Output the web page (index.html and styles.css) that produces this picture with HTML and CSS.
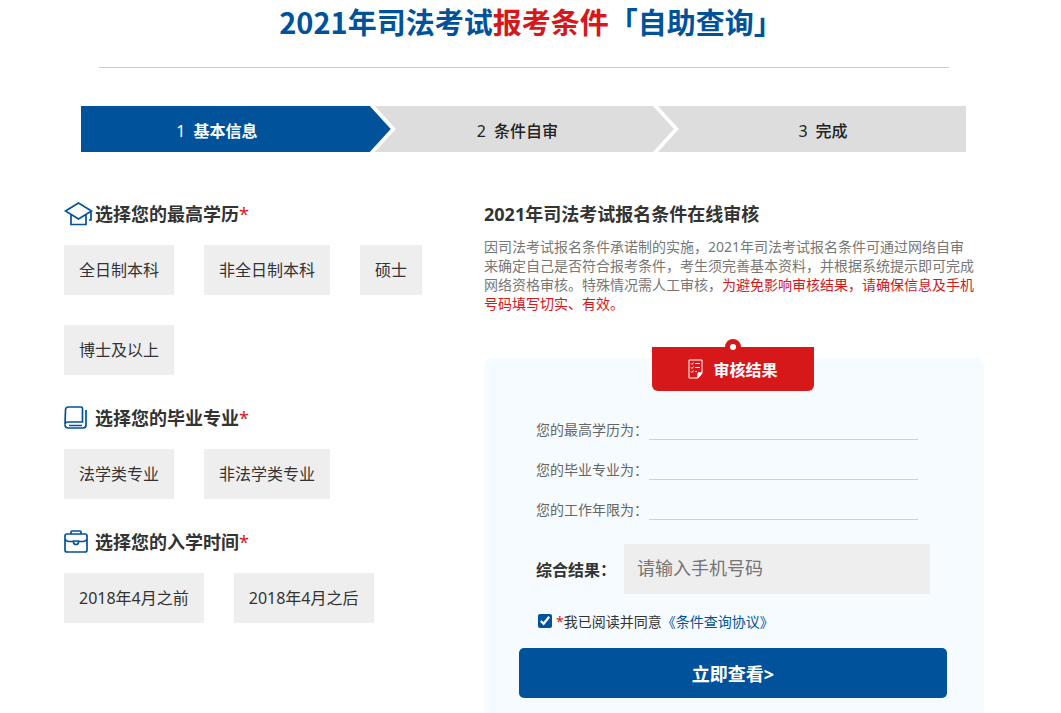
FILE: index.html
```html
<!DOCTYPE html>
<html lang="zh-CN">
<head>
  <meta charset="UTF-8">
  <meta name="viewport" content="width=device-width, initial-scale=1">
  <title>2021年司法考试报考条件自助查询</title>
  <link rel="stylesheet" href="styles.css">
</head>
<body>
  <div class="container">
    <h1 class="page-title">2021年司法考试<span class="red">报考条件</span>「自助查询」</h1>

    <ol class="steps">
      <li class="step active"><span class="step-num">1</span>基本信息</li>
      <li class="step"><span class="step-num">2</span>条件自审</li>
      <li class="step"><span class="step-num">3</span>完成</li>
    </ol>

    <div class="main">
      <div class="choices">
        <section class="group">
          <h2 class="group-title">
            <svg class="icon" width="31" height="24" viewBox="0 0 31 24">
              <path d="M1.500 9L14.500 1l13 8-13 8z M7 12.500v10h15v-10 M27 9.500v8.500h-2"/>
            </svg>选择您的最高学历<span class="red star">*</span>
          </h2>
          <div class="options">
            <button type="button" class="option">全日制本科</button>
            <button type="button" class="option">非全日制本科</button>
            <button type="button" class="option">硕士</button>
            <button type="button" class="option">博士及以上</button>
          </div>
        </section>

        <section class="group">
          <h2 class="group-title">
            <svg class="icon" width="31" height="24" viewBox="0 0 31 24">
              <path d="M4.500 1H17q1.500 0 1.500 1.500V16H4q-3 0-3 2.500L1.500 4q0-3 3-3z"/>
              <path d="M1 18.500q0 3.500 3.500 3.500H19q3 0 3-3V4 M5 19.500h13"/>
            </svg>选择您的毕业专业<span class="red star">*</span>
          </h2>
          <div class="options">
            <button type="button" class="option">法学类专业</button>
            <button type="button" class="option">非法学类专业</button>
          </div>
        </section>

        <section class="group">
          <h2 class="group-title">
            <svg class="icon" width="31" height="24" viewBox="0 0 31 24">
              <rect x="1" y="4" width="22" height="18" rx="2"/>
              <path d="M7 4V2q0-1 1-1h8q1 0 1 1v2 M1 9.500q2 2 4 2h4.500 M14.500 11.500H19q2 0 4-2 M9.500 11v1q0 2.500 2.500 2.500t2.500-2.500v-1z"/>
            </svg>选择您的入学时间<span class="red star">*</span>
          </h2>
          <div class="options">
            <button type="button" class="option">2018年4月之前</button>
            <button type="button" class="option">2018年4月之后</button>
          </div>
        </section>
      </div>

      <div class="review">
        <h2 class="review-title">2021年司法考试报名条件在线审核</h2>
        <p class="review-text">因司法考试报名条件承诺制的实施，2021年司法考试报名条件可通过网络自审来确定自己是否符合报考条件，考生须完善基本资料，并根据系统提示即可完成网络资格审核。特殊情况需人工审核，<span class="red">为避免影响审核结果，请确保信息及手机号码填写切实、有效。</span></p>

        <form class="result-card">
          <h3 class="result-badge">
            <svg class="badge-icon" width="16" height="20" viewBox="0 0 16 20">
              <path d="M10 19H1V1h13v13z M10 19v-5h4"/>
              <path d="M3 4.500l1 1 1.500-2 M7 4.500h5 M3 8.500l1 1 1.500-2 M7 8.500h5 M3 12.500l1 1 1.500-2 M7 12.500h2"/>
              <path class="fold" d="M10 14h4l-4 5z"/>
            </svg>审核结果
          </h3>

          <div class="fields">
            <div class="field">
              <label for="education">您的最高学历为：</label>
              <input type="text" id="education" class="line-input" readonly>
            </div>
            <div class="field">
              <label for="major">您的毕业专业为：</label>
              <input type="text" id="major" class="line-input" readonly>
            </div>
            <div class="field">
              <label for="years">您的工作年限为：</label>
              <input type="text" id="years" class="line-input" readonly>
            </div>
          </div>

          <div class="phone">
            <label for="phone">综合结果：</label>
            <input type="tel" id="phone" class="phone-input" placeholder="请输入手机号码">
          </div>

          <div class="agree">
            <input type="checkbox" id="agree" class="agree-box" checked>
            <label for="agree"><span class="red">*</span>我已阅读并同意</label><a href="#">《条件查询协议》</a>
          </div>

          <button type="submit" class="submit-btn">立即查看&gt;</button>
        </form>
      </div>
    </div>
  </div>
</body>
</html>
```
FILE: styles.css
```css
*,
*::before {
  box-sizing: border-box;
}

body {
  margin: 0;
  padding: 0 13px 0 0;
  background: #fff;
  color: #333;
  font-family: "Noto Sans", "Noto Sans CJK SC", "Microsoft YaHei", sans-serif;
  font-size: 14px;
}

h1, h2, h3, p, ol {
  margin: 0;
  padding: 0;
}

button, input {
  font-family: inherit;
}

.red {
  color: #d6181b;
}

.container {
  max-width: 920px;
  margin: 0 auto;
}

.page-title {
  height: 68px;
  margin: 0 35px;
  padding-left: 14px;
  border-bottom: 1px solid #ccc;
  color: #00529b;
  font-family: "Noto Sans CJK SC", "Microsoft YaHei", sans-serif;
  font-size: 29px;
  line-height: 42px;
  text-align: center;
}

/* 步骤条 */
.steps {
  display: grid;
  grid-template-columns: 35fr 32fr 33fr;
  margin: 38px 18px 50px 17px;
  list-style: none;
}

.step {
  display: flex;
  align-items: center;
  justify-content: center;
  height: 46px;
  padding-top: 4px;
  background: #ddd;
  color: #222;
  font-size: 16px;
  font-weight: 500;
  line-height: 24px;
}

.step + .step {
  margin-left: -16px;
  padding-right: 14px;
  clip-path: polygon(0 0, calc(100% - 21px) 0, 100% 50%, calc(100% - 21px) 100%, 0 100%, 21px 50%);
}

.step.active {
  padding-right: 38px;
  background: #00529b;
  color: #fff;
  font-weight: 700;
  clip-path: polygon(0 0, calc(100% - 21px) 0, 100% 50%, calc(100% - 21px) 100%, 0 100%);
}

.step + .step:last-child {
  padding-right: 0;
  padding-left: 22px;
  clip-path: polygon(0 0, 100% 0, 100% 100%, 0 100%, 21px 50%);
}

.step-num {
  margin-right: 8px;
  font-weight: 400;
}

.main {
  display: grid;
  grid-template-columns: 21fr 25fr;
}

/* 左侧选项 */
.choices {
  display: flex;
  flex-direction: column;
  gap: 31px;
}

.group-title {
  display: flex;
  align-items: center;
  margin-bottom: 19px;
  font-size: 18px;
  line-height: 24px;
}

.icon {
  fill: none;
  stroke: #00529b;
  stroke-width: 1.7;
}

.star {
  font-weight: 400;
}

.options {
  display: flex;
  flex-wrap: wrap;
  gap: 30px;
}

.option {
  height: 50px;
  padding: 0 15px 2px;
  border: none;
  background: #eee;
  color: #333;
  font-size: 16px;
  cursor: pointer;
}

/* 右侧审核 */
.review-title {
  margin-bottom: 11px;
  font-size: 18px;
  line-height: 24px;
}

.review-text {
  margin-bottom: 45px;
  padding-right: 8px;
  color: #777;
  line-height: 19px;
}

.result-card {
  padding: 0 37px 15px 35px;
  border-radius: 8px 8px 0 0;
  background: #f5fbff;
}

.result-badge {
  position: relative;
  top: -11px;
  display: flex;
  align-items: center;
  justify-content: center;
  gap: 9px;
  width: 162px;
  height: 44px;
  margin: 0 auto 18px;
  border-radius: 0 0 6px 6px;
  background: #d6181b;
  color: #fff;
  font-size: 16px;
}

.result-badge::before {
  content: "";
  position: absolute;
  top: -8px;
  left: 50%;
  width: 16px;
  height: 16px;
  margin-left: -8px;
  border: 5px solid #d6181b;
  border-radius: 50%;
  background: #fff;
}

.badge-icon {
  fill: none;
  stroke: #fff;
}

.badge-icon .fold {
  fill: #fff;
}

.fields {
  display: flex;
  flex-direction: column;
  gap: 20px;
  padding: 0 29px 0 17px;
}

.field {
  display: flex;
  height: 20px;
  color: #666;
  line-height: 20px;
}

.line-input {
  flex: 1;
  min-width: 0;
  margin-left: 1px;
  padding: 0;
  border: none;
  border-bottom: 1px solid #ccd3d8;
  background: none;
}

.phone {
  display: flex;
  align-items: center;
  gap: 8px;
  margin-top: 24px;
  padding: 0 17px;
  font-size: 16px;
  font-weight: 700;
}

.phone-input {
  flex: 1;
  min-width: 0;
  height: 50px;
  padding: 0 13px 2px;
  border: none;
  background: #eee;
  font-size: 18px;
}

.phone-input::placeholder {
  color: #757575;
}

.agree {
  display: flex;
  align-items: center;
  margin: 18px 0 16px;
  padding-left: 19px;
  line-height: 20px;
}

.agree-box {
  width: 14px;
  height: 14px;
  margin: 0 4px 2px 0;
  accent-color: #00529b;
}

.agree a {
  color: #00529b;
  text-decoration: none;
}

.submit-btn {
  display: block;
  width: 100%;
  height: 50px;
  border: none;
  border-radius: 5px;
  background: #00529b;
  color: #fff;
  font-size: 18px;
  font-weight: 700;
  cursor: pointer;
}
```
